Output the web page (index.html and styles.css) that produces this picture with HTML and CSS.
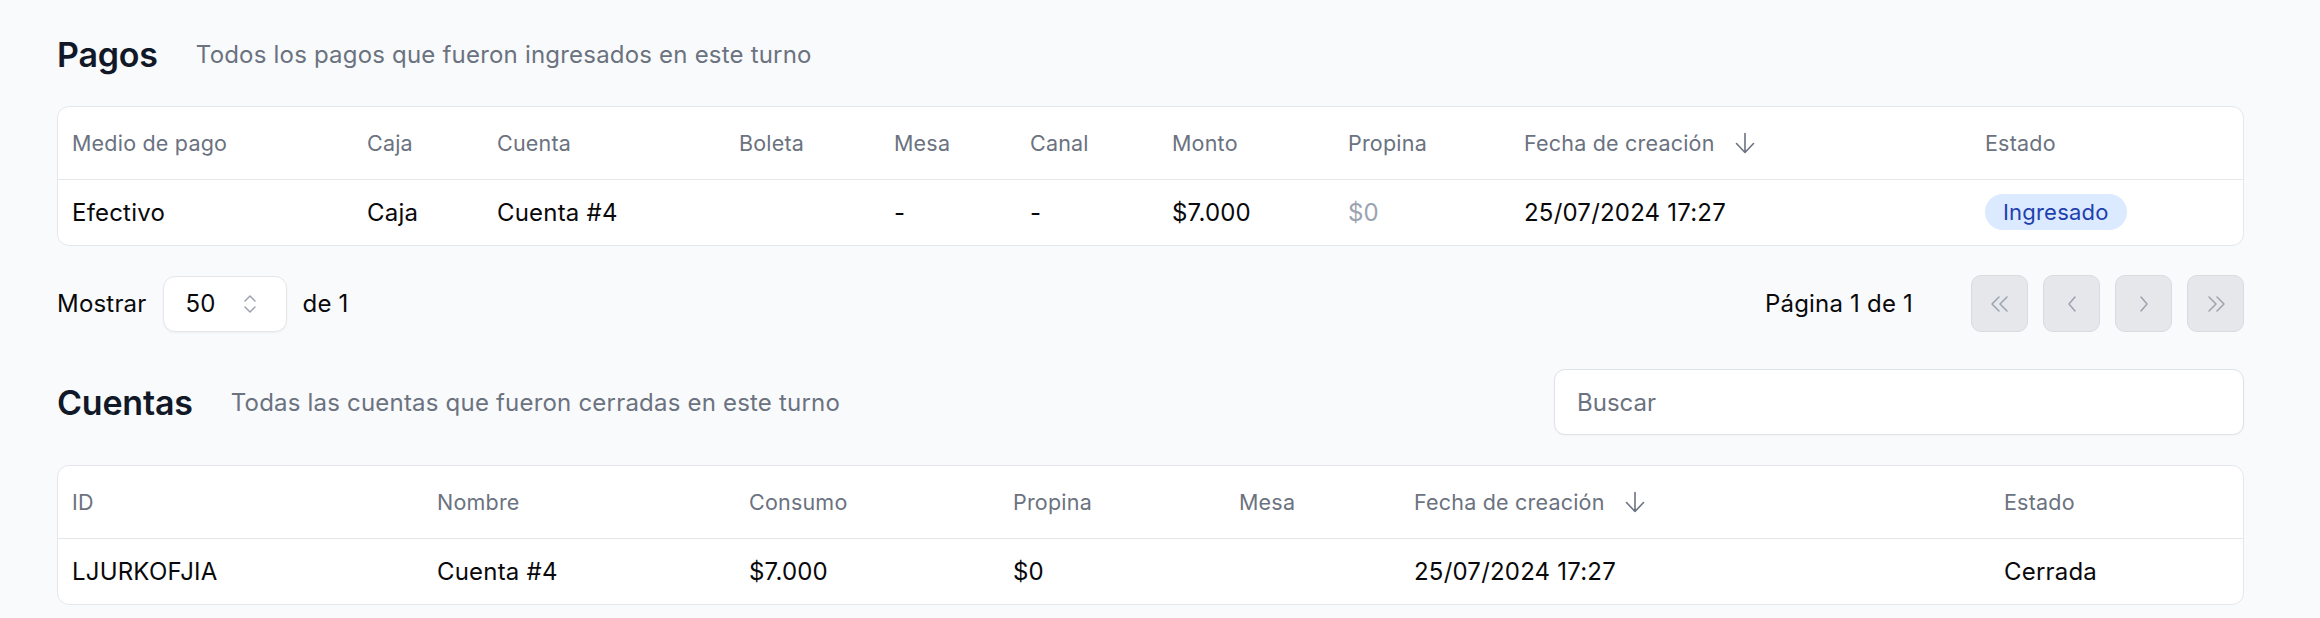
FILE: index.html
```html
<!DOCTYPE html>
<html lang="es">
<head>
<meta charset="utf-8">
<title>Turno</title>
<link rel="stylesheet" href="styles.css">
</head>
<body>
<main class="page">
  <section class="section">
    <header class="section-head">
      <h2 class="title">Pagos</h2>
      <p class="subtitle">Todos los pagos que fueron ingresados en este turno</p>
    </header>
    <div class="card">
      <table class="table">
        <colgroup>
          <col class="p1"><col class="p2"><col class="p3"><col class="p4"><col class="p5">
          <col class="p6"><col class="p7"><col class="p8"><col class="p9"><col class="p10">
        </colgroup>
        <thead>
          <tr>
            <th>Medio de pago</th>
            <th>Caja</th>
            <th>Cuenta</th>
            <th>Boleta</th>
            <th>Mesa</th>
            <th>Canal</th>
            <th>Monto</th>
            <th>Propina</th>
            <th><span class="sort">Fecha de creación
              <svg class="sort-icon" viewBox="0 0 20 22" width="20" height="22" aria-hidden="true"><path d="M10 1.5v19M1.5 11.5l8.5 9 8.5-9" fill="none" stroke="currentColor" stroke-width="1.6" stroke-linecap="round" stroke-linejoin="round"/></svg>
            </span></th>
            <th>Estado</th>
          </tr>
        </thead>
        <tbody>
          <tr>
            <td>Efectivo</td>
            <td>Caja</td>
            <td>Cuenta #4</td>
            <td></td>
            <td>-</td>
            <td>-</td>
            <td>$7.000</td>
            <td class="muted">$0</td>
            <td>25/07/2024 17:27</td>
            <td><span class="badge">Ingresado</span></td>
          </tr>
        </tbody>
      </table>
    </div>
    <div class="pager">
      <div class="pager-left">
        <span>Mostrar</span>
        <div class="select">
          <span>50</span>
          <svg class="select-icon" viewBox="0 0 24 24" width="24" height="24" aria-hidden="true"><path d="m7 15 5 5 5-5M7 9l5-5 5 5" fill="none" stroke="currentColor" stroke-width="1.5" stroke-linecap="round" stroke-linejoin="round"/></svg>
        </div>
        <span>de 1</span>
      </div>
      <div class="pager-right">
        <span class="page-info">Página 1 de 1</span>
        <div class="buttons">
          <button class="pbtn" disabled aria-label="Primera página"><svg viewBox="0 0 24 24" width="24" height="24"><path d="M11 5l-7 7 7 7M19 5l-7 7 7 7" fill="none" stroke="currentColor" stroke-width="1.5" stroke-linecap="round" stroke-linejoin="round"/></svg></button>
          <button class="pbtn" disabled aria-label="Página anterior"><svg viewBox="0 0 24 24" width="24" height="24"><path d="M15 5l-6 7 6 7" fill="none" stroke="currentColor" stroke-width="1.5" stroke-linecap="round" stroke-linejoin="round"/></svg></button>
          <button class="pbtn" disabled aria-label="Página siguiente"><svg viewBox="0 0 24 24" width="24" height="24"><path d="M9 5l6 7-6 7" fill="none" stroke="currentColor" stroke-width="1.5" stroke-linecap="round" stroke-linejoin="round"/></svg></button>
          <button class="pbtn" disabled aria-label="Última página"><svg viewBox="0 0 24 24" width="24" height="24"><path d="M5 5l7 7-7 7M13 5l7 7-7 7" fill="none" stroke="currentColor" stroke-width="1.5" stroke-linecap="round" stroke-linejoin="round"/></svg></button>
        </div>
      </div>
    </div>
  </section>

  <section class="section">
    <header class="section-head second">
      <h2 class="title">Cuentas</h2>
      <p class="subtitle">Todas las cuentas que fueron cerradas en este turno</p>
      <input class="search" type="text" placeholder="Buscar">
    </header>
    <div class="card">
      <table class="table">
        <colgroup>
          <col class="c1"><col class="c2"><col class="c3"><col class="c4"><col class="c5"><col class="c6"><col class="c7">
        </colgroup>
        <thead>
          <tr>
            <th>ID</th>
            <th>Nombre</th>
            <th>Consumo</th>
            <th>Propina</th>
            <th>Mesa</th>
            <th><span class="sort">Fecha de creación
              <svg class="sort-icon" viewBox="0 0 20 22" width="20" height="22" aria-hidden="true"><path d="M10 1.5v19M1.5 11.5l8.5 9 8.5-9" fill="none" stroke="currentColor" stroke-width="1.6" stroke-linecap="round" stroke-linejoin="round"/></svg>
            </span></th>
            <th>Estado</th>
          </tr>
        </thead>
        <tbody>
          <tr>
            <td>LJURKOFJIA</td>
            <td>Cuenta #4</td>
            <td>$7.000</td>
            <td>$0</td>
            <td></td>
            <td>25/07/2024 17:27</td>
            <td>Cerrada</td>
          </tr>
        </tbody>
      </table>
    </div>
  </section>
</main>
</body>
</html>
```

FILE: styles.css
```css
* { box-sizing: border-box; }

html, body {
  margin: 0;
  background: #f9fafb;
}

body {
  font-family: Inter, "Noto Sans", "Liberation Sans", sans-serif;
  color: #09090b;
  font-size: 24px;
  letter-spacing: 0.2px;
}

.page {
  padding: 21px 76px 0 57px;
}

.section-head {
  display: flex;
  align-items: center;
  gap: 38px;
  height: 66px;
}

.section-head.second {
  margin-top: 37px;
}

.title {
  margin: 0;
  font-size: 34px;
  font-weight: 600;
  color: #111827;
  letter-spacing: -0.2px;
}

.subtitle {
  margin: 0;
  font-size: 24px;
  color: #6b7280;
}

.search {
  margin-left: auto;
  width: 690px;
  height: 66px;
  border: 1px solid #dfe2e7;
  border-radius: 11px;
  background: #fff;
  padding: 0 22px;
  font: inherit;
  font-size: 24px;
  color: #09090b;
  box-shadow: 0 1px 2px rgba(0,0,0,0.03);
}

.search::placeholder { color: #6b7280; }

.card {
  margin-top: 19px;
  background: #fff;
  border: 1px solid #e5e7eb;
  border-radius: 12px;
  overflow: hidden;
}

.section + .section .card { margin-top: 30px; }

.table {
  width: 100%;
  border-collapse: collapse;
  table-layout: fixed;
}

.table th,
.table td {
  text-align: left;
  padding: 0 14px;
  white-space: nowrap;
  vertical-align: middle;
}

.table th {
  height: 72px;
  font-size: 21.5px;
  font-weight: 400;
  color: #6b7280;
}

.table thead tr { border-bottom: 1px solid #e5e7eb; }

.table td {
  height: 66px;
  font-size: 24px;
  color: #09090b;
}

.table td.muted { color: #9ca3af; }

.sort {
  display: inline-flex;
  align-items: center;
  gap: 20px;
}

.sort-icon { color: #6b7280; display: block; }

.p1 { width: 295px; }
.p2 { width: 130px; }
.p3 { width: 242px; }
.p4 { width: 155px; }
.p5 { width: 136px; }
.p6 { width: 142px; }
.p7 { width: 176px; }
.p8 { width: 176px; }
.p9 { width: 461px; }
.p10 { width: auto; }

.c1 { width: 365px; }
.c2 { width: 312px; }
.c3 { width: 264px; }
.c4 { width: 226px; }
.c5 { width: 175px; }
.c6 { width: 590px; }
.c7 { width: auto; }

.badge {
  display: inline-flex;
  align-items: center;
  height: 36px;
  padding: 0 18px;
  border-radius: 18px;
  background: #dbeafe;
  color: #1e40af;
  font-size: 22px;
}

.pager {
  margin-top: 29px;
  height: 57px;
  display: flex;
  align-items: center;
  justify-content: space-between;
  font-size: 24px;
  font-weight: 400;
}

.pager-left {
  display: flex;
  align-items: center;
  gap: 16px;
}

.select {
  width: 124px;
  height: 56px;
  display: flex;
  align-items: center;
  justify-content: space-between;
  padding: 0 24px 0 22px;
  background: #fff;
  border: 1px solid #e5e7eb;
  border-radius: 12px;
  box-shadow: 0 1px 2px rgba(0,0,0,0.05);
}

.select-icon { color: #9ca3af; display: block; }

.pager-right {
  display: flex;
  align-items: center;
  gap: 58px;
}

.buttons {
  display: flex;
  gap: 15px;
}

.pbtn {
  width: 57px;
  height: 57px;
  padding: 0;
  display: flex;
  align-items: center;
  justify-content: center;
  background: #e5e7eb;
  border: 1px solid #d8dbe0;
  border-radius: 10px;
  color: #9ca3af;
}

.pbtn svg { display: block; }
```
